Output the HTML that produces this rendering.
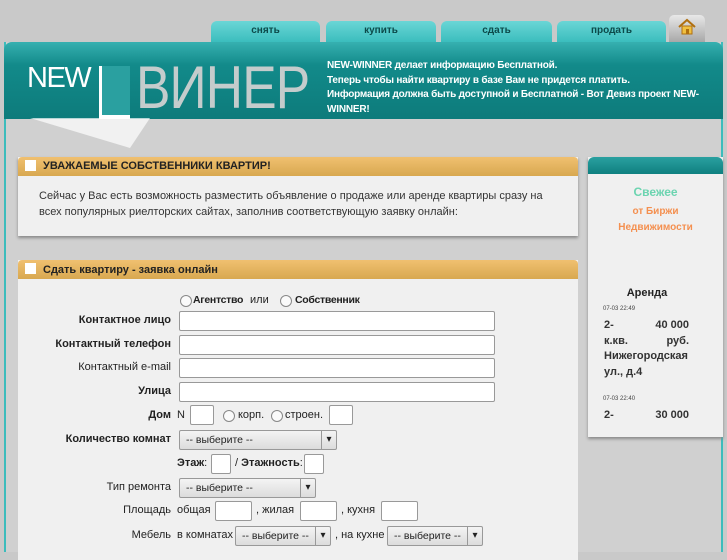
<html><head><style>
body{margin:0;width:727px;height:545px;overflow:hidden;background:#c9c9c9;font-family:"Liberation Sans","DejaVu Sans",sans-serif;position:relative}
.a{position:absolute}
.tab{position:absolute;top:21px;height:21px;background:linear-gradient(#6ad6d6,#3bbdbd);border-radius:6px 6px 0 0;font-size:10px;color:#0c4a4a;text-align:center;line-height:20px;font-weight:bold}
.lbl{position:absolute;right:556px;font-size:11px;color:#222;text-align:right;white-space:nowrap}
.b{font-weight:bold}
.in{position:absolute;background:#fff;border:1px solid #999;border-radius:2px;box-sizing:border-box}
.sel{position:absolute;background:linear-gradient(#f4f4f4,#dcdcdc);border:1px solid #999;border-radius:2px;box-sizing:border-box;font-size:10.5px;color:#222;padding-left:6px;line-height:18px}
.sel:after{content:"▾";position:absolute;right:0;top:0;width:14px;border-left:1px solid #999;text-align:center;font-size:10px}
.t{position:absolute;font-size:11px;color:#222;white-space:nowrap}
.r{position:absolute;width:10px;height:10px;border:1px solid #888;border-radius:50%;background:#fafafa}
</style></head><body>
<div class="tab" style="left:211px;width:109px">снять</div>
<div class="tab" style="left:326px;width:110px">купить</div>
<div class="tab" style="left:441px;width:111px">сдать</div>
<div class="tab" style="left:557px;width:109px">продать</div>
<div class="a" style="left:669px;top:15px;width:36px;height:27px;background:linear-gradient(#e8e8e8,#a8a8a8);border-radius:5px 5px 0 0"></div>
<svg class="a" style="left:677px;top:18px" width="20" height="18" viewBox="0 0 20 18"><path d="M2 9 L10 2 L18 9" fill="none" stroke="#b07010" stroke-width="2"/><rect x="5" y="8" width="10" height="8" fill="#f0c040" stroke="#b07010"/><rect x="9" y="11" width="3" height="5" fill="#b07010"/></svg>
<div class="a" style="left:4px;top:42px;width:719px;height:510px;background:#d0d0d0;border-left:2px solid #3cbcbc;border-right:2px solid #3cbcbc;box-sizing:border-box"></div>
<div class="a" style="left:4px;top:42px;width:719px;height:77px;background:linear-gradient(#36b0b0,#128a8a 30%,#0d7b7b);border-radius:8px 8px 0 0"></div>
<div class="a" style="left:27px;top:62px;font-size:29px;color:#fff;letter-spacing:-1.5px">NEW</div>
<div class="a" style="left:30px;top:118px;width:0;height:0;border-left:100px solid transparent;border-right:20px solid transparent;border-top:30px solid rgba(255,255,255,.7)"></div>
<div class="a" style="left:99px;top:66px;width:31px;height:53px;background:#fff"></div>
<div class="a" style="left:102px;top:66px;width:28px;height:49px;background:#2aa0a0"></div>
<div class="a" style="left:136px;top:53px;font-size:60px;color:#c4cccc;letter-spacing:-1px;transform:scaleX(.86);transform-origin:0 0">ВИНЕР</div>
<div class="a" style="left:327px;top:59px;font-size:10px;font-weight:bold;color:#fff;line-height:14.5px;width:392px;letter-spacing:-0.2px">NEW-WINNER делает информацию Бесплатной.<br>Теперь чтобы найти квартиру в базе Вам не придется платить.<br>Информация должна быть доступной и Бесплатной - Вот Девиз проект NEW-WINNER!</div>

<div class="a" style="left:18px;top:157px;width:560px;height:79px;background:#f0f0f0;box-shadow:0 2px 3px #888"></div>
<div class="a" style="left:18px;top:157px;width:560px;height:19px;background:linear-gradient(#f0c070,#d8a850);border-radius:4px 4px 0 0"></div>
<div class="a" style="left:25px;top:160px;width:11px;height:11px;background:#fff"></div>
<div class="a b" style="left:43px;top:160px;font-size:11px;color:#222">УВАЖАЕМЫЕ СОБСТВЕННИКИ КВАРТИР!</div>
<div class="a" style="left:39px;top:188px;font-size:11px;color:#333;line-height:16px;width:520px">Сейчас у Вас есть возможность разместить объявление о продаже или аренде квартиры сразу на всех популярных риелторских сайтах, заполнив соответствующую заявку онлайн:</div>

<div class="a" style="left:18px;top:260px;width:560px;height:300px;background:#f0f0f0"></div>
<div class="a" style="left:18px;top:260px;width:560px;height:19px;background:linear-gradient(#f0c070,#d8a850);border-radius:4px 4px 0 0"></div>
<div class="a" style="left:25px;top:263px;width:11px;height:11px;background:#fff"></div>
<div class="a b" style="left:43px;top:264px;font-size:11px;color:#222">Сдать квартиру - заявка онлайн</div>

<div class="a" style="left:588px;top:157px;width:135px;height:280px;background:#f0f0f0;box-shadow:0 2px 3px #888"></div>
<div class="a" style="left:588px;top:157px;width:135px;height:17px;background:linear-gradient(#2aa0a0,#0f8080);border-radius:6px 6px 0 0"></div>
<div class="a b" style="left:588px;width:135px;top:185px;text-align:center;font-size:12px;color:#6cd4b0">Свежее</div>
<div class="a b" style="left:588px;width:135px;top:204px;text-align:center;font-size:10px;color:#f49050;line-height:16px">от Биржи<br>Недвижимости</div>
<div class="a b" style="left:588px;width:118px;top:287px;text-align:center;font-size:11px;color:#222">Аренда</div>
<div class="a" style="left:603px;top:306px;font-size:6px;color:#444">07-03 22:49</div>
<div class="a b" style="left:604px;top:318px;width:85px;font-size:11px;color:#333;line-height:15.5px">2-<span style="float:right">40 000</span><br>к.кв.<span style="float:right">руб.</span><br>Нижегородская ул., д.4</div>
<div class="a" style="left:603px;top:396px;font-size:6px;color:#444">07-03 22:40</div>
<div class="a b" style="left:604px;top:409px;width:85px;font-size:11px;color:#333">2-<span style="float:right">30 000</span></div>

<div class="r" style="left:180px;top:295px"></div><div class="t b" style="left:193px;top:294px;font-size:10.5px;letter-spacing:-0.3px">Агентство</div><div class="t" style="left:250px;top:294px">или</div>
<div class="r" style="left:280px;top:295px"></div><div class="t b" style="left:295px;top:294px;font-size:10.5px;letter-spacing:-0.3px">Собственник</div>
<div class="lbl b" style="top:314px">Контактное лицо</div><div class="in" style="left:179px;top:311px;width:316px;height:20px"></div>
<div class="lbl b" style="top:338px">Контактный телефон</div><div class="in" style="left:179px;top:335px;width:316px;height:20px"></div>
<div class="lbl" style="top:361px">Контактный e-mail</div><div class="in" style="left:179px;top:358px;width:316px;height:20px"></div>
<div class="lbl b" style="top:385px">Улица</div><div class="in" style="left:179px;top:382px;width:316px;height:20px"></div>
<div class="lbl b" style="top:409px">Дом</div><div class="t" style="left:177px;top:409px">N</div>
<div class="in" style="left:190px;top:405px;width:24px;height:20px"></div>
<div class="r" style="left:223px;top:410px"></div><div class="t" style="left:238px;top:409px">корп.</div>
<div class="r" style="left:271px;top:410px"></div><div class="t" style="left:285px;top:409px">строен.</div>
<div class="in" style="left:329px;top:405px;width:24px;height:20px"></div>
<div class="lbl b" style="top:433px">Количество комнат</div><div class="sel" style="left:179px;top:430px;width:158px;height:20px">-- выберите --</div>
<div class="t b" style="left:177px;top:457px">Этаж<span style="font-weight:normal">:</span></div><div class="in" style="left:211px;top:454px;width:20px;height:20px"></div>
<div class="t b" style="left:235px;top:457px"><span style="font-weight:normal">/</span> Этажность<span style="font-weight:normal">:</span></div><div class="in" style="left:304px;top:454px;width:20px;height:20px"></div>
<div class="lbl" style="top:481px">Тип ремонта</div><div class="sel" style="left:179px;top:478px;width:137px;height:20px">-- выберите --</div>
<div class="lbl" style="top:504px">Площадь</div><div class="t" style="left:177px;top:504px">общая</div>
<div class="in" style="left:215px;top:501px;width:37px;height:20px"></div><div class="t" style="left:256px;top:504px">, жилая</div>
<div class="in" style="left:300px;top:501px;width:37px;height:20px"></div><div class="t" style="left:341px;top:504px">, кухня</div>
<div class="in" style="left:381px;top:501px;width:37px;height:20px"></div>
<div class="lbl" style="top:529px">Мебель</div><div class="t" style="left:177px;top:529px">в комнатах</div>
<div class="sel" style="left:235px;top:526px;width:96px;height:20px">-- выберите --</div><div class="t" style="left:335px;top:529px">, на кухне</div>
<div class="sel" style="left:387px;top:526px;width:96px;height:20px">-- выберите --</div>
</body></html>
